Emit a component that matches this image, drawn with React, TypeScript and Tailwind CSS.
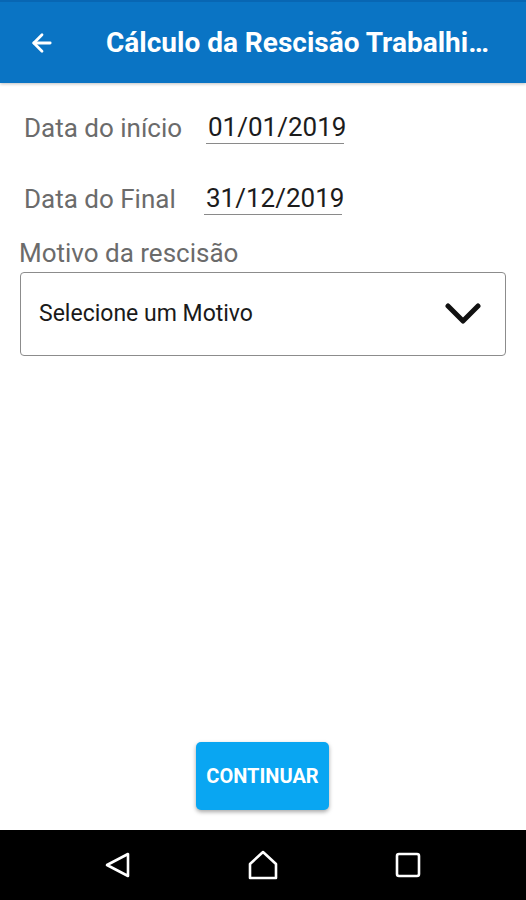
import { ArrowLeft } from 'lucide-react';

function DateRow({ label, value, valueOffset }: { label: string; value: string; valueOffset: string }) {
  return (
    <div className="flex items-end">
      <span className="w-[184px] pl-[24px] text-[26px] leading-[32px] text-[#6b6b6b]">{label}</span>
      <div className={`${valueOffset} flex flex-col`}>
        <span className="text-[26px] leading-[32px] text-[#1c1c1c] px-[2px]">{value}</span>
        <div className="h-[1px] w-[138px] bg-[#8a8a8a]" />
      </div>
    </div>
  );
}

export default function App() {
  return (
    <div className="w-[526px] h-[900px] flex flex-col bg-white font-['Roboto','Liberation_Sans',sans-serif]">
      {/* toolbar */}
      <div className="h-[83px] flex items-center bg-[#0a74c4] border-t-2 border-[#0866b3] shadow-[0_1px_3px_rgba(0,0,0,0.25)]">
        <div className="w-[106px] pl-[28px]">
          <ArrowLeft size={28} strokeWidth={2.4} className="text-white" />
        </div>
        <h1 className="flex-1 min-w-0 pr-[24px] truncate text-[28px] font-bold text-white">
          Cálculo da Rescisão Trabalhista
        </h1>
      </div>

      <div className="flex-1 flex flex-col">
        <div className="pt-[28px]">
          <DateRow label="Data do início" value="01/01/2019" valueOffset="ml-[22px]" />
        </div>
        <div className="pt-[38px]">
          <DateRow label="Data do Final" value="31/12/2019" valueOffset="ml-[20px]" />
        </div>
        <div className="pl-[19px] pt-[22px] text-[26px] leading-[32px] text-[#6b6b6b]">Motivo da rescisão</div>
        <div className="mx-[20px] mt-[3px] h-[84px] flex items-center justify-between rounded-[4px] border border-[#8c8c8c] pl-[18px] pr-[24px]">
          <span className="text-[23px] text-[#1a1a1a]">Selecione um Motivo</span>
          <svg width="36" height="22" viewBox="0 0 36 22">
            <path d="M3 3 L18 18 L33 3" fill="none" stroke="#111" strokeWidth="5" strokeLinecap="round" strokeLinejoin="round" />
          </svg>
        </div>

        <div className="mt-auto mb-[20px] flex justify-center">
          <button className="ml-[-1px] w-[133px] h-[68px] rounded-[5px] bg-[#09a6f2] text-white text-[20px] font-bold shadow-[0_2px_4px_rgba(0,0,0,0.35)]">
            CONTINUAR
          </button>
        </div>
      </div>

      {/* android nav bar */}
      <div className="h-[70px] bg-black flex items-center justify-center">
        <div className="w-[145px] flex justify-center">
          <svg width="30" height="30" viewBox="0 0 30 30">
            <path d="M25 4 L25 26 L4 15 Z" fill="none" stroke="white" strokeWidth="2.6" strokeLinejoin="round" />
          </svg>
        </div>
        <div className="w-[145px] flex justify-center">
          <svg width="32" height="32" viewBox="0 0 32 32">
            <path d="M16 3 L29 15 L29 29 L3 29 L3 15 Z" fill="none" stroke="white" strokeWidth="2.6" strokeLinejoin="round" />
          </svg>
        </div>
        <div className="w-[145px] flex justify-center">
          <svg width="28" height="28" viewBox="0 0 28 28">
            <rect x="3" y="3" width="22" height="22" rx="2" fill="none" stroke="white" strokeWidth="2.6" />
          </svg>
        </div>
      </div>
    </div>
  );
}
